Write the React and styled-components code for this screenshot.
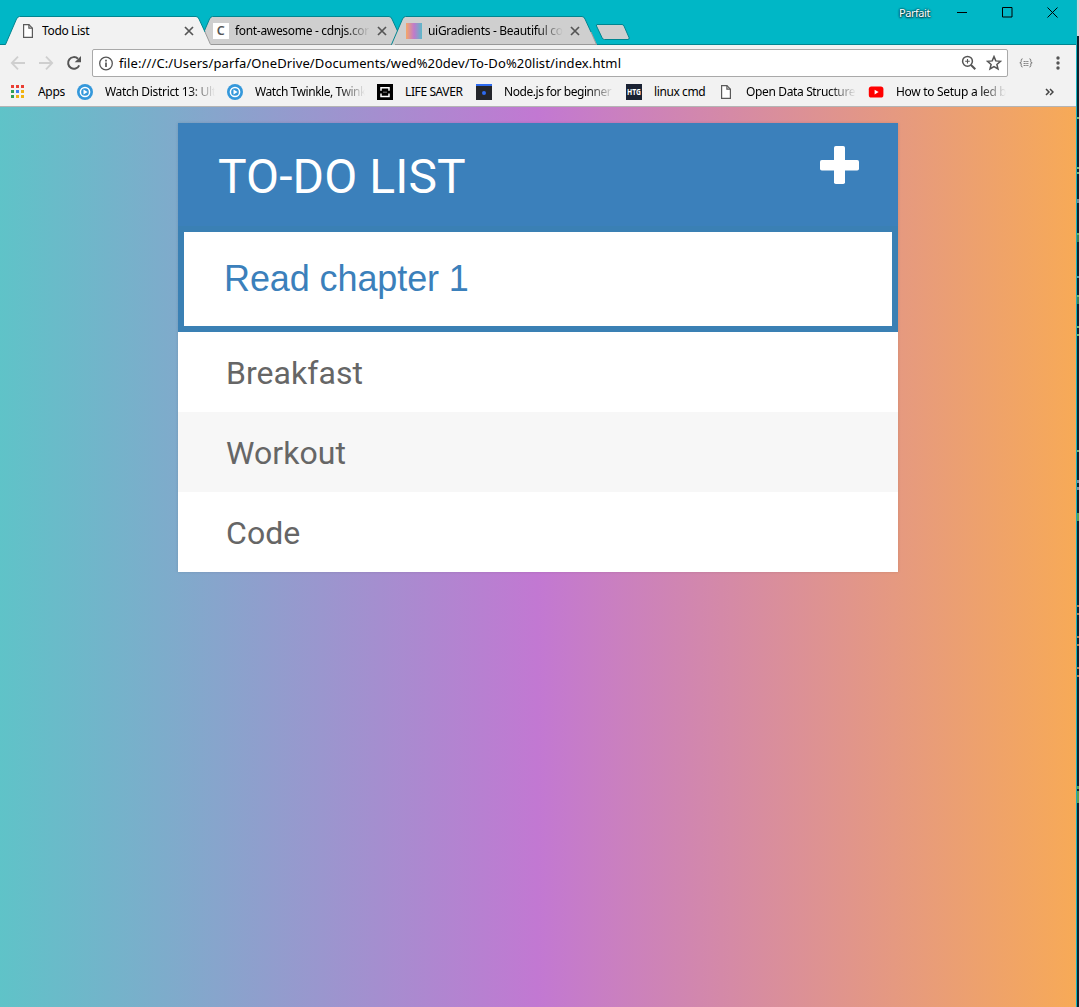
import React from "react";
import styled, { createGlobalStyle } from "styled-components";

const UI = `"Noto Sans", "Open Sans", sans-serif`;
const TEAL = "#00b7c6";
const TEAL_EDGE = "#008590";
const CHROME = "#f2f2f2";
const GREY = "#5a5a5a";

const Global = createGlobalStyle`
  * { box-sizing: border-box; }
  html, body { margin: 0; padding: 0; height: 100%; overflow: hidden; }
  svg { display: block; flex: none; }
`;

const Screen = styled.div`
  display: flex;
  width: 1079px;
  height: 1007px;
  overflow: hidden;
  background: #10202c;
`;
const Window = styled.div`
  display: flex;
  flex-direction: column;
  width: 1077px;
  flex: none;
  border-right: 1px solid #14b4c0;
`;
const Behind = styled.div`
  width: 2px;
`;

const TitleBar = styled.header`
  display: flex;
  justify-content: space-between;
  align-items: flex-start;
  height: 45px;
  padding-left: 5px;
  background: ${TEAL};
  box-shadow: inset 0 -1px 0 ${TEAL_EDGE};
`;
const TabStrip = styled.div`
  display: flex;
  padding-top: 16px;
`;
const TabBox = styled.div`
  position: relative;
  z-index: ${(p) => (p.$active ? 2 : 1)};
  display: flex;
  align-items: center;
  width: 206px;
  height: 29px;
  margin-right: -13px;
  padding: 0 17px 0 15px;
`;
const TabShape = styled.svg`
  position: absolute;
  inset: 0;
  z-index: -1;
`;
const TabIcon = styled.div`
  display: flex;
  width: 16px;
  justify-content: center;
`;
const Fade = styled.span`
  overflow: hidden;
  white-space: nowrap;
  font-family: ${UI};
  font-size: 12px;
  letter-spacing: ${(p) => p.$ls || 0}px;
  line-height: 18px;
  color: #000;
  width: ${(p) => p.$w}px;
  flex: none;
  ${(p) =>
    p.$fade &&
    `mask-image: linear-gradient(to right, #000 calc(100% - 26px), transparent);`}
`;
const TabTitle = styled(Fade)`
  margin: 1px 7px 0 6px;
`;
const NewTab = styled.svg`
  margin: 7px 0 0 11px;
  z-index: 3;
`;
const WindowControls = styled.div`
  display: flex;
  align-items: center;
  height: 25px;
  padding-right: 18px;
`;
const User = styled.span`
  margin-right: 26px;
  font: 11px/16px ${UI};
  letter-spacing: -0.45px;
  width: 32px;
  white-space: nowrap;
  color: #fff;
  text-shadow: 0 0 2px #003c42, 0 0 2px #003c42, 0 1px 2px #00474e;
`;
const ControlIcon = styled.svg`
  margin-right: ${(p) => p.$gap || 0}px;
`;

const Toolbar = styled.nav`
  display: flex;
  align-items: center;
  height: 36px;
  padding: 0 8px 0 10px;
  background: ${CHROME};
`;
const NavIcon = styled.svg`
  margin-right: ${(p) => p.$gap || 0}px;
`;
const Omnibox = styled.div`
  display: flex;
  align-items: center;
  width: 916px;
  height: 28px;
  padding: 0 5px 0 6px;
  background: #fff;
  border: 1px solid #a9a9a9;
  border-radius: 2px;
`;
const Url = styled.span`
  flex: 1;
  margin-left: 5px;
  font: 13px/20px ${UI};
  letter-spacing: 0.11px;
  white-space: nowrap;
  color: #000;
`;
const BraceButton = styled.svg`
  margin: 0 22px 0 11px;
`;
const Bookmarks = styled.nav`
  display: flex;
  align-items: center;
  height: 26px;
  padding: 0 18px 4px 10px;
  background: ${CHROME};
  border-bottom: 1px solid #b4b4b4;
`;
const BookmarkItem = styled.div`
  display: flex;
  align-items: center;
  gap: 12px;
  margin-right: 12px;
`;
const IconSlot = styled.div`
  display: flex;
  justify-content: center;
  width: 16px;
`;
const More = styled.svg`
  margin-left: auto;
  margin-right: 4px;
`;

const Page = styled.main`
  flex: 1;
  padding: 16px 178px 0;
  background: linear-gradient(to left, #f7aa57, #c278d2, #5fc3c8);
`;
const Card = styled.section`
  width: 720px;
  background: #fff;
  box-shadow: 0 0 3px rgba(0, 0, 0, 0.12);
`;
const CardHeader = styled.div`
  display: flex;
  justify-content: space-between;
  height: 103px;
  padding: 23px 39px 0 40px;
  background: #3b80bb;
`;
const Title = styled.h1`
  margin: 0;
  font: 400 48px/62px Roboto, sans-serif;
  letter-spacing: 0.1px;
  color: #fff;
`;
const TodoInput = styled.input`
  display: block;
  width: 720px;
  height: 106px;
  padding: 0 40px;
  border: 6px solid #3a80b4;
  border-radius: 0;
  outline: 0;
  background: #fff;
  color: #3b80bb;
  font: 36px "Liberation Sans", Arial, sans-serif;
  letter-spacing: -0.1px;
`;
const List = styled.ul`
  margin: 0;
  padding: 0;
  list-style: none;
`;
const Row = styled.li`
  height: 80px;
  padding: 0 48px;
  font: 400 32px/82px Roboto, sans-serif;
  letter-spacing: 0.05px;
  color: #666;
  background: ${(p) => (p.$shaded ? "#f7f7f7" : "#fff")};
`;

const FileIcon = () => (
  <svg width="12" height="14" viewBox="0 0 12 14" fill="#fff" stroke={GREY} strokeWidth="1.2">
    <path d="M1.6 .6h5.3l3.5 3.6v9.2H1.6z" />
    <path d="M6.9 .6v3.6h3.5" fill="none" />
  </svg>
);
const CdnIcon = () => (
  <svg width="16" height="16">
    <rect width="16" height="16" fill="#fff" />
    <text x="7.8" y="12" textAnchor="middle" fontFamily="Noto Sans" fontWeight="600" fontSize="12.5" fill="#555">C</text>
  </svg>
);
const GradientIcon = () => (
  <svg width="16" height="16">
    <defs>
      <linearGradient id="fav">
        <stop offset="0" stopColor="#f5a768" />
        <stop offset=".5" stopColor="#c07acb" />
        <stop offset="1" stopColor="#5bb9c8" />
      </linearGradient>
    </defs>
    <rect width="16" height="16" fill="url(#fav)" />
  </svg>
);
const AppsIcon = () => (
  <svg width="16" height="16">
    {["#ea3e33", "#ea3e33", "#ea3e33", "#2f9e55", "#3c82f0", "#f0b310", "#2f9e55", "#f0b310", "#f0b310"].map((c, i) => (
      <rect key={i} x={1 + (i % 3) * 5} y={1 + Math.floor(i / 3) * 5} width="3" height="3" fill={c} />
    ))}
  </svg>
);
const PlayIcon = () => (
  <svg width="16" height="16">
    <circle cx="8" cy="8" r="8" fill="#3498db" />
    <circle cx="8" cy="8" r="4.6" fill="none" stroke="#fff" strokeWidth="1.5" />
    <path d="M6.5 5.5L10.6 8l-4.1 2.5z" fill="#fff" />
  </svg>
);
const SaverIcon = () => (
  <svg width="16" height="16" fill="none" stroke="#fff" strokeWidth="1.5">
    <rect width="16" height="16" fill="#000" stroke="none" />
    <path d="M4 6.8V3.7h8v3.1M4 9.5v3.1h8V9.5" />
    <path d="M6 8.2h4" strokeWidth="1" stroke="#777" />
  </svg>
);
const NodeIcon = () => (
  <svg width="16" height="16">
    <rect width="16" height="16" fill="#24262b" />
    <rect width="16" height="2" fill="#2d6bf0" />
    <circle cx="8" cy="9" r="2" fill="#2d6bf0" />
  </svg>
);
const HtgIcon = () => (
  <svg width="16" height="16">
    <rect width="16" height="16" fill="#1a2233" />
    <text x="8" y="11.2" textAnchor="middle" textLength="14" lengthAdjust="spacingAndGlyphs" fontFamily="Noto Sans" fontWeight="700" fontSize="8.6" fill="#fff">HTG</text>
  </svg>
);
const YoutubeIcon = () => (
  <svg width="16" height="16">
    <rect x=".8" y="2.6" width="14.6" height="11" rx="2.6" fill="#f00" />
    <path d="M6.6 5.8l4 2.3-4 2.3z" fill="#fff" />
  </svg>
);
const CloseIcon = () => (
  <svg width="10" height="10" stroke="#555" strokeWidth="1.7">
    <path d="M1 1l8 8M9 1l-8 8" />
  </svg>
);

const Tab = ({ active, icon, children, fade, ls }) => (
  <TabBox $active={active}>
    <TabShape width="206" height="29">
      <path d="M0 29L.5 28.5 11.5 3Q12.8.5 14.5.5H191Q193 .5 194 3L206 29z" fill={active ? CHROME : "#cfcfcf"} />
      <path d="M0 28.5H.5L11.5 3Q12.8.5 14.5.5H191Q193 .5 194 3L200 16" fill="none" stroke={TEAL_EDGE} />
      <path d="M200 16L205.5 28.5" fill="none" stroke="#999" />
      {!active && <path d="M4 28.5H206" stroke="#999" />}
    </TabShape>
    <TabIcon>{icon}</TabIcon>
    <TabTitle $w={135} $fade={fade} $ls={ls}>{children}</TabTitle>
    <CloseIcon />
  </TabBox>
);

const BOOKMARKS = [
  ["Apps", AppsIcon, 27, -0.3],
  ["Watch District 13: Ult", PlayIcon, 110, -0.32, true],
  ["Watch Twinkle, Twink", PlayIcon, 110, -0.45, true],
  ["LIFE SAVER", SaverIcon, 59, -0.4],
  ["Node.js for beginner", NodeIcon, 110, -0.45, true],
  ["linux cmd", HtgIcon, 52, -0.4],
  ["Open Data Structure", FileIcon, 110, -0.36, true],
  ["How to Setup a led b", YoutubeIcon, 110, -0.3, true],
];

const CODE_BITS = [
  [117, 2, "#7fae72"], [167, 2, "#7fae72"], [172, 2, "#7fae72"], [199, 4, "#6f8792"],
  [233, 2, "#6fae64"], [235, 7, "#3d7a52"], [276, 2, "#5f97a0"], [295, 2, "#7fae72"],
  [297, 7, "#3d7a52"], [326, 2, "#7fae72"], [334, 2, "#7fae72"], [450, 2, "#7fae72"],
  [480, 3, "#7d8c9c"], [487, 3, "#7d8c9c"], [513, 8, "#5d9a52"], [605, 2, "#b5774c"],
  [613, 2, "#b5774c"], [636, 2, "#b5774c"], [644, 2, "#b5774c"], [667, 2, "#b5774c"],
  [675, 2, "#b5774c"], [786, 3, "#5d9a52"], [791, 12, "#5d9a52"],
];

export default function App() {
  return (
    <Screen>
      <Global />
      <Window>
        <TitleBar>
          <TabStrip>
            <Tab active icon={<FileIcon />} ls={-0.35}>Todo List</Tab>
            <Tab icon={<CdnIcon />} fade ls={-0.32}>font-awesome - cdnjs.cor</Tab>
            <Tab icon={<GradientIcon />} fade ls={-0.3}>uiGradients - Beautiful co</Tab>
            <NewTab width="36" height="18">
              <path d="M2 1.5H27Q28.4 1.5 29 3L34 14.5Q34.5 16.5 33 16.5H9.5Q8 16.5 7.2 15L1.5 3Q1 1.5 2 1.5z" fill="#cfcfcf" stroke={TEAL_EDGE} />
            </NewTab>
          </TabStrip>
          <WindowControls>
            <User>Parfait</User>
            <ControlIcon $gap={35} width="10" height="11" stroke="#000"><path d="M0 5.5h10" /></ControlIcon>
            <ControlIcon $gap={34} width="11" height="11" stroke="#000" fill="none"><path d="M.5 .5h9.5v9.5h-9.5z" /></ControlIcon>
            <ControlIcon width="11" height="11" stroke="#000"><path d="M.5 .5l10 10M10.5 .5l-10 10" /></ControlIcon>
          </WindowControls>
        </TitleBar>
        <Toolbar>
          <NavIcon $gap={12} width="16" height="16" fill="none" stroke="#cfcfcf" strokeWidth="1.8"><path d="M15 8H2M8 1.7L1.8 8 8 14.3" /></NavIcon>
          <NavIcon $gap={12} width="16" height="16" fill="none" stroke="#cfcfcf" strokeWidth="1.8"><path d="M1 8h13M8 1.7L14.2 8 8 14.3" /></NavIcon>
          <NavIcon $gap={10} width="16" height="16" fill="none" stroke="#555" strokeWidth="2"><path d="M13.2 10.3A5.8 5.8 0 1 1 12 3.8" /><path d="M15 1v6.3H8.7z" fill="#555" stroke="none" /></NavIcon>
          <Omnibox>
            <NavIcon width="15" height="15" fill="none" stroke="#555" strokeWidth="1.3"><circle cx="7" cy="7.5" r="6.3" /><path d="M7 6.5V11M7 3.7v1.7" strokeWidth="1.7" /></NavIcon>
            <Url>file:///C:/Users/parfa/OneDrive/Documents/wed%20dev/To-Do%20list/index.html</Url>
            <NavIcon $gap={9} width="16" height="16" fill="none" stroke="#555" strokeWidth="1.5"><circle cx="6.5" cy="6.3" r="4.9" /><path d="M10 10l4.3 4.3" strokeWidth="2" /><path d="M4.2 6.3h4.6M6.5 4v4.6" strokeWidth="1.1" /></NavIcon>
            <NavIcon width="16" height="16" viewBox="0 0 16 16" fill="none" stroke="#555" strokeWidth="1.5"><path d="M8 1.6l1.8 4.3 4.7.4-3.6 3.1 1.1 4.6L8 11.6l-4 2.4 1.1-4.6-3.6-3.1 4.7-.4z" /></NavIcon>
          </Omnibox>
          <BraceButton width="14" height="10" fill="none" stroke="#777" strokeWidth="1">
            <path d="M3.6 .8Q2.2 .8 2.2 2.2V3.6Q2.2 4.8 .8 4.8 2.2 4.8 2.2 6V7.6Q2.2 9 3.6 9M10.4 .8Q11.8 .8 11.8 2.2V3.6Q11.8 4.8 13.2 4.8 11.8 4.8 11.8 6V7.6Q11.8 9 10.4 9" />
            <path d="M4.6 3.5h4.8M4.6 5.5h4.8M4.6 7.5h4.8" strokeDasharray="1.3 .5" />
          </BraceButton>
          <NavIcon width="6" height="14" fill="#555"><circle cx="3" cy="2" r="1.7" /><circle cx="3" cy="7" r="1.7" /><circle cx="3" cy="12" r="1.7" /></NavIcon>
        </Toolbar>
        <Bookmarks>
          {BOOKMARKS.map(([label, Icon, w, ls, fade], i) => (
            <BookmarkItem key={i}>
              <IconSlot><Icon /></IconSlot>
              <Fade $w={w} $ls={ls} $fade={fade}>{label}</Fade>
            </BookmarkItem>
          ))}
          <More width="9" height="8" fill="none" stroke="#444" strokeWidth="1.5"><path d="M1 1l3 3-3 3M5 1l3 3-3 3" /></More>
        </Bookmarks>
        <Page>
          <Card>
            <CardHeader>
              <Title>TO-DO LIST</Title>
              <svg width="39" height="39" fill="#fff">
                <rect x="14" y="0" width="11" height="38" rx="1.8" />
                <rect x="0" y="14" width="39" height="10.5" rx="1.8" />
              </svg>
            </CardHeader>
            <TodoInput defaultValue="Read chapter 1" spellCheck={false} />
            <List>
              {["Breakfast", "Workout", "Code"].map((t, i) => (
                <Row key={t} $shaded={i % 2 === 1}>{t}</Row>
              ))}
            </List>
          </Card>
        </Page>
      </Window>
      <Behind>
        <svg width="2" height="1007">
          <rect width="2" height="36" fill="#d6d6dc" />
          {CODE_BITS.map(([y, h, c]) => (
            <rect key={y} y={y} width="2" height={h} fill={c} />
          ))}
        </svg>
      </Behind>
    </Screen>
  );
}
